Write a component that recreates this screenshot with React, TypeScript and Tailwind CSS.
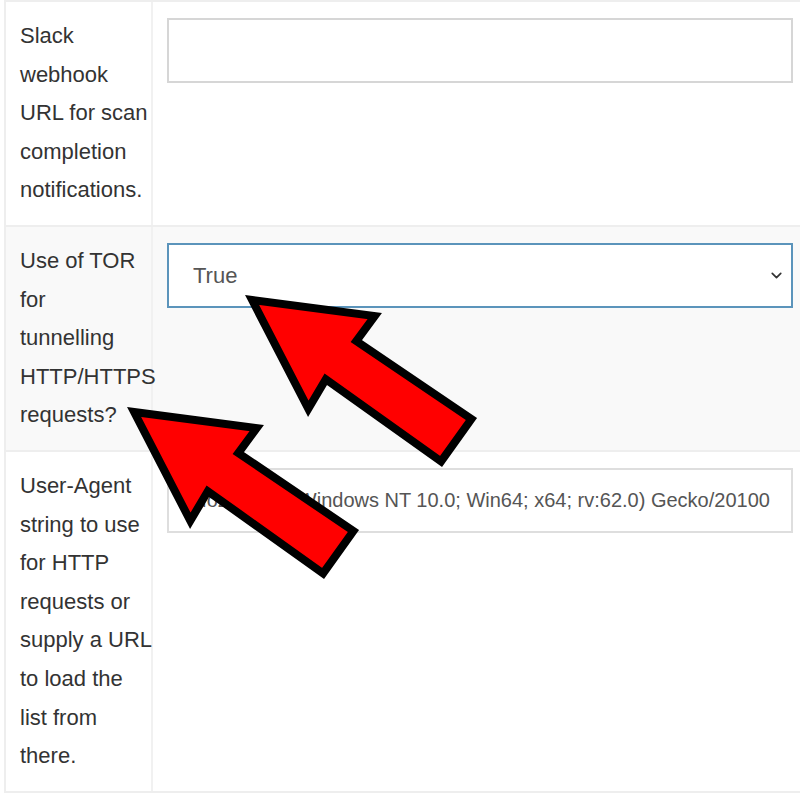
import { ChevronDown } from "lucide-react"

const ARROW = "7.1,5 129.7,21.1 111.3,46 226.4,124 196.1,166.4 80.8,84.2 63.3,113.8"

function Row({ lines, shaded, children }: { lines: string[]; shaded?: boolean; children: React.ReactNode }) {
  return (
    <div className={`flex border-t-2 border-[#eeeeee] ${shaded ? "bg-[#f9f9f9]" : "bg-white"}`}>
      <div className="w-[147px] shrink-0 border-r-2 border-[#f1f1f1] px-[14px] py-[15px] text-[22px] leading-[38.6px] text-[#333333]">
        {lines.map((l) => (
          <div key={l} className="whitespace-nowrap">
            {l}
          </div>
        ))}
      </div>
      <div className="min-w-0 flex-1 pl-[14px] pr-[7px] pt-[16px]">{children}</div>
    </div>
  )
}

export default function App() {
  return (
    <div className="relative h-[800px] w-[800px] overflow-hidden bg-white font-['Liberation_Sans',Arial,sans-serif]">
      <div className="ml-[4px] border-b-2 border-l-2 border-[#eeeeee]">
        <Row lines={["Slack", "webhook", "URL for scan", "completion", "notifications."]}>
          <input className="block h-[65px] w-full border-2 border-[#d6d6d6] bg-white px-[23px] text-[21px] text-[#555555] outline-none" />
        </Row>
        <Row lines={["Use of TOR", "for", "tunnelling", "HTTP/HTTPS", "requests?"]} shaded>
          <div className="relative">
            <select
              defaultValue="True"
              className="block h-[65px] w-full appearance-none border-2 border-[#5b94bb] bg-white pl-[24px] text-[22px] text-[#555555] outline-none"
            >
              <option>True</option>
              <option>False</option>
            </select>
            <ChevronDown className="pointer-events-none absolute right-[8px] top-[24px] h-[17px] w-[17px] text-[#333333]" strokeWidth={2.4} />
          </div>
        </Row>
        <Row
          lines={["User-Agent", "string to use", "for HTTP", "requests or", "supply a URL", "to load the", "list from", "there."]}
        >
          <input
            defaultValue="Mozilla/5.0 (Windows NT 10.0; Win64; x64; rv:62.0) Gecko/20100101 Firefox/62.0"
            className="block h-[65px] w-full border-2 border-[#dedede] bg-white px-[21px] text-[20px] text-[#555555] outline-none"
          />
        </Row>
      </div>

      {/* red arrows drawn over the form */}
      <svg className="pointer-events-none absolute left-0 top-0" width="800" height="800" viewBox="0 0 800 800">
        <g transform="translate(245 295)">
          <polygon points={ARROW} fill="#ff0000" stroke="#000000" strokeWidth="8" strokeLinejoin="miter" />
        </g>
        <g transform="translate(127 407)">
          <polygon points={ARROW} fill="#ff0000" stroke="#000000" strokeWidth="8" strokeLinejoin="miter" />
        </g>
      </svg>
    </div>
  )
}
